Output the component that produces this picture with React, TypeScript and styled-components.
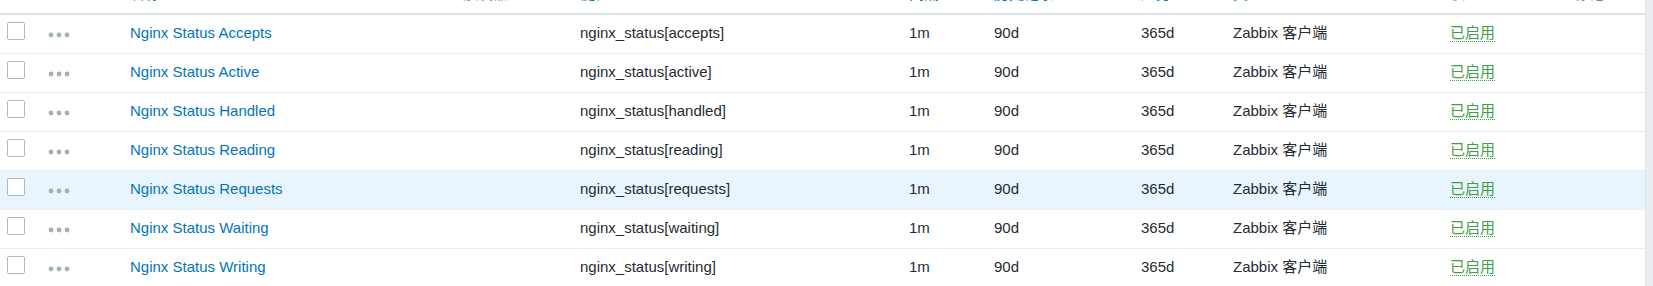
import { ReactElement } from 'react'
import styled, { createGlobalStyle } from 'styled-components'

const GlobalStyle = createGlobalStyle`
  html, body {
    margin: 0;
    padding: 0;
    background: #ebeef0;
    overflow: hidden;
  }
  body {
    font-family: 'Liberation Sans', Arial, 'Noto Sans CJK SC', sans-serif;
    font-size: 15px;
    color: #1f2c33;
  }
`

const Panel = styled.div`
  width: 1645px;
  background: #ffffff;
  border-right: 1px solid #dfe4e7;
  height: 286px;
  overflow: hidden;
`

const Table = styled.table`
  width: 1645px;
  margin-top: -20px;
  table-layout: fixed;
  border-collapse: separate;
  border-spacing: 0;
`

const Col = styled.col<{ $w: number }>`
  width: ${(p) => p.$w}px;
`

const HeadCell = styled.th<{ $sortable?: boolean }>`
  text-align: left;
  font-weight: normal;
  white-space: nowrap;
  line-height: 18px;
  padding: 5px 6px 10px;
  vertical-align: bottom;
  border-bottom: 2px solid #dce1e5;
  color: ${(p) => (p.$sortable ? '#0275b8' : '#768d99')};
`

const Row = styled.tr<{ $hover?: boolean }>`
  background: ${(p) => (p.$hover ? '#e8f5ff' : '#ffffff')};
`

const Cell = styled.td`
  line-height: 18px;
  padding: 9px 6px 11px;
  white-space: nowrap;
  vertical-align: top;
  border-bottom: 1px solid #ebeef0;
`

const CheckCell = styled(Cell)`
  padding: 7px 0 0 7px;
`

const Checkbox = styled.span`
  display: block;
  width: 16px;
  height: 16px;
  border: 1px solid #acbbc4;
  border-radius: 2px;
  background: #ffffff;
`

const DotsCell = styled(Cell)`
  padding-top: 17px;
`

const Dots = styled.svg`
  display: block;
`

const NameLink = styled.a`
  color: #0275b8;
  text-decoration: none;
`

const Status = styled.span`
  color: #429e47;
  border-bottom: 1px dotted #429e47;
`

const columns = [
  { w: 42, title: '', sort: false },
  { w: 82, title: '', sort: false },
  { w: 333, title: '名称', sort: true },
  { w: 117, title: '触发器', sort: false },
  { w: 329, title: '键值', sort: true },
  { w: 85, title: '间隔', sort: true },
  { w: 147, title: '历史记录', sort: true },
  { w: 92, title: '趋势', sort: true },
  { w: 217, title: '类型', sort: true },
  { w: 124, title: '状态', sort: true },
  { w: 77, title: '标记', sort: false },
]

const items = [
  'Accepts',
  'Active',
  'Handled',
  'Reading',
  'Requests',
  'Waiting',
  'Writing',
]

export default function App(): ReactElement {
  return (
    <>
      <GlobalStyle />
      <Panel>
        <Table>
          <colgroup>
            {columns.map((c, i) => (
              <Col key={i} $w={c.w} />
            ))}
          </colgroup>
          <thead>
            <tr>
              {columns.map((c, i) => (
                <HeadCell key={i} $sortable={c.sort}>
                  {c.title}
                </HeadCell>
              ))}
            </tr>
          </thead>
          <tbody>
            {items.map((name) => (
              <Row key={name} $hover={name === 'Requests'}>
                <CheckCell>
                  <Checkbox />
                </CheckCell>
                <DotsCell>
                  <Dots width="22" height="6" viewBox="0 0 22 6">
                    <circle cx="3" cy="3" r="2.4" fill="#a3b0b9" />
                    <circle cx="11" cy="3" r="2.4" fill="#a3b0b9" />
                    <circle cx="19" cy="3" r="2.4" fill="#a3b0b9" />
                  </Dots>
                </DotsCell>
                <Cell>
                  <NameLink href="#">Nginx Status {name}</NameLink>
                </Cell>
                <Cell />
                <Cell>nginx_status[{name.toLowerCase()}]</Cell>
                <Cell>1m</Cell>
                <Cell>90d</Cell>
                <Cell>365d</Cell>
                <Cell>Zabbix 客户端</Cell>
                <Cell>
                  <Status>已启用</Status>
                </Cell>
                <Cell />
              </Row>
            ))}
          </tbody>
        </Table>
      </Panel>
    </>
  )
}
